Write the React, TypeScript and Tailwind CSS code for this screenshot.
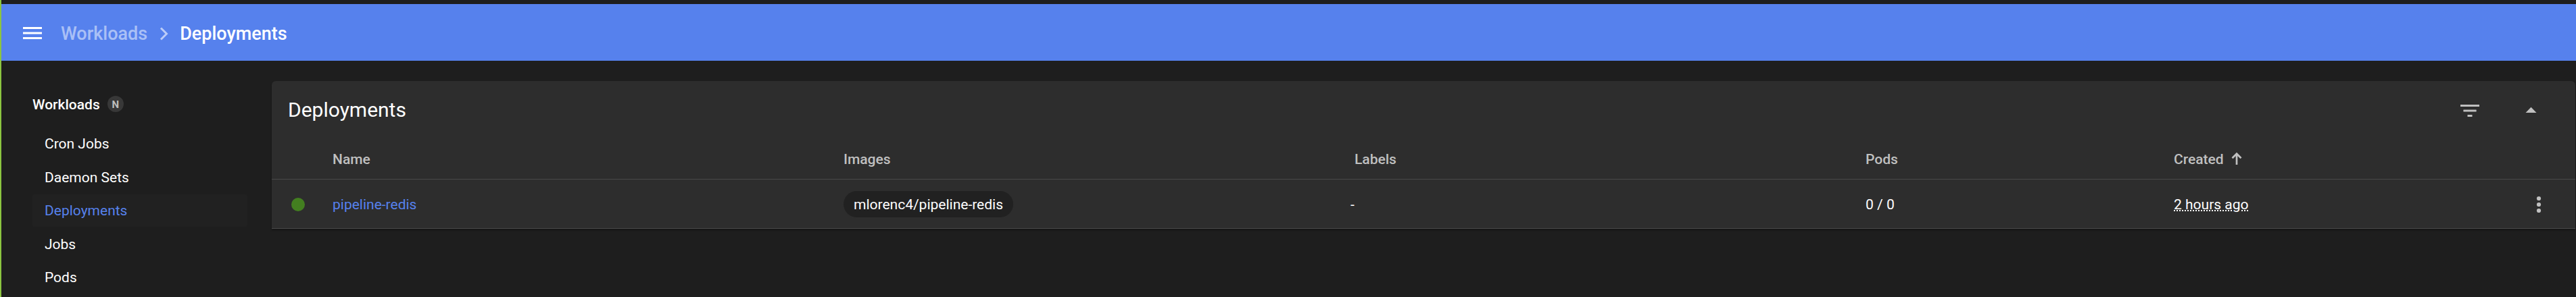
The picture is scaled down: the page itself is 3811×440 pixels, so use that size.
const navItems = ['Cron Jobs', 'Daemon Sets', 'Deployments', 'Jobs', 'Pods'];

function MenuIcon() {
  return (
    <svg width="36" height="36" viewBox="0 0 36 36" shapeRendering="crispEdges" fill="white">
      <rect x="4" y="10" width="28" height="3" />
      <rect x="4" y="17" width="28" height="4" fillOpacity="0.5" />
      <rect x="4" y="18" width="28" height="2" />
      <rect x="4" y="25" width="28" height="3" />
    </svg>
  );
}

function FilterIcon() {
  return (
    <svg width="36" height="36" viewBox="0 0 36 36" fill="#c0c0c0">
      <rect x="4" y="11" width="28" height="3" />
      <rect x="8.5" y="18" width="19" height="4" fillOpacity="0.5" />
      <rect x="8.5" y="19" width="19" height="2" />
      <rect x="14.5" y="26" width="7" height="3" />
    </svg>
  );
}

function TopBar() {
  return (
    <header className="mt-1.5 flex h-[84px] items-center bg-[#5681ed] text-[27px] font-medium leading-[42px] text-white">
      <div className="ml-7 mr-6">
        <MenuIcon />
      </div>
      <span className="pt-1 text-white/50">Workloads</span>
      <svg className="ml-[18px] mr-4 mt-1" width="14" height="20" viewBox="0 0 14 20">
        <path d="M2 1.5 10.5 10 2 18.5" fill="none" stroke="white" strokeOpacity="0.6" strokeWidth="3" />
      </svg>
      <span className="pt-1">Deployments</span>
    </header>
  );
}

function Sidebar() {
  return (
    <nav className="flex w-[400px] flex-col pl-[46px] pr-9 text-white">
      <div className="flex h-[99px] items-center pt-[29px] text-[21px] font-medium">
        <span className="pt-1">Workloads</span>
        <span className="ml-[11px] flex size-6 items-center justify-center rounded-full bg-[#383838] pt-0.5 text-[15px] font-bold text-[#bdbdbd]">
          N
        </span>
      </div>
      <ul className="flex flex-col gap-[1.5px]">
        {navItems.map((item) => (
          <li
            key={item}
            className={
              item === 'Deployments'
                ? 'flex h-12 items-center rounded-[3px] bg-[#212121] pl-[18px] pt-0.5 text-[21px] text-[#5681ed]'
                : 'flex h-12 items-center pl-[18px] pt-0.5 text-[21px]'
            }
          >
            {item}
          </li>
        ))}
      </ul>
    </nav>
  );
}

const columns = 'grid grid-cols-[90px_756px_750px_762px_456px_1fr] items-center';

function DeploymentsCard() {
  return (
    <section className="mt-[30px] h-[219px] w-[3408px] rounded-t-md bg-[#2d2d2d] text-[21px] text-white shadow-[0_2px_3px_rgba(0,0,0,0.35)]">
      <div className="flex h-[84px] items-center pl-6 text-[#c0c0c0]">
        <h1 className="grow pt-0.5 text-[30px] leading-9 text-white">Deployments</h1>
        <FilterIcon />
        <svg className="ml-[54px] mr-12" width="36" height="36" viewBox="0 0 36 36">
          <path d="M10.5 23h16l-8-8.3z" fill="currentColor" />
        </svg>
      </div>
      <div className={`${columns} h-[62px] border-b border-[#494949] pt-[5px] font-medium text-[#c0c0c0]`}>
        <span />
        <span>Name</span>
        <span>Images</span>
        <span className="pl-1.5">Labels</span>
        <span>Pods</span>
        <span className="flex items-center">
          Created
          <svg className="mb-[5px] ml-2.5" width="18" height="20" viewBox="0 0 18 20">
            <path d="M9 19V3M2.5 9.2 9 2.7l6.5 6.5" fill="none" stroke="currentColor" strokeWidth="2.7" />
          </svg>
        </span>
      </div>
      <div className={`${columns} h-[73px] border-b border-[#494949] pt-0.5`}>
        <span className="ml-[29px] size-5 rounded-full bg-[#437f20]" />
        <span className="pt-px text-[#5681ed]">pipeline-redis</span>
        <span className="flex">
          <span className="mb-px flex h-[39px] items-center rounded-full bg-[#212121] px-[15px] pt-0.5">
            mlorenc4/pipeline-redis
          </span>
        </span>
        <span className="pt-px">-</span>
        <span className="pt-px">0 / 0</span>
        <span className="flex items-center justify-between pr-9">
          <span className="pt-px underline decoration-dotted decoration-2 underline-offset-2">2 hours ago</span>
          <svg width="36" height="36" viewBox="0 0 36 36" fill="#c0c0c0">
            <circle cx="18" cy="9" r="3.1" />
            <circle cx="18" cy="18" r="3.1" />
            <circle cx="18" cy="27" r="3.1" />
          </svg>
        </span>
      </div>
    </section>
  );
}

export default function App() {
  return (
    <div className="flex h-[440px] w-[3811px] flex-col overflow-hidden border-l-2 border-[#8cc540] bg-[#1e1e1e] font-['Roboto',sans-serif]">
      <TopBar />
      <main className="flex grow">
        <Sidebar />
        <DeploymentsCard />
      </main>
    </div>
  );
}
